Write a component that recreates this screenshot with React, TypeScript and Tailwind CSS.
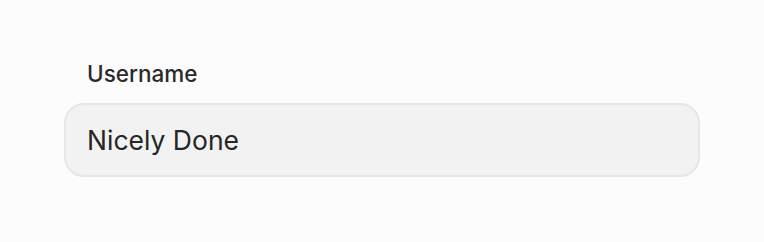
import React from "react";

export default function App() {
  return (
    <div
      className="w-[764px] h-[242px] bg-[#fcfcfc] px-16 pt-[58px]"
      style={{ fontFamily: "Inter, 'Noto Sans', sans-serif" }}
    >
      <label className="block pl-[23px] text-[22.5px] leading-[32px] font-medium text-[#2a2a2a] mb-[13px]">
        Username
      </label>
      <div className="h-[74px] w-full rounded-[20px] border-2 border-[#e6e6e6] bg-[#f2f2f2] flex items-center pl-[21px] pt-[2px]">
        <span className="text-[26.5px] text-[#262626]">Nicely Done</span>
      </div>
    </div>
  );
}
